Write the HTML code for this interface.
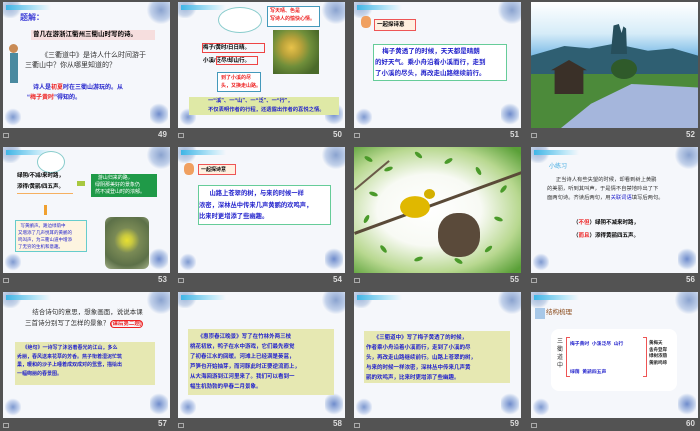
<!DOCTYPE html>
<html><head><meta charset="utf-8"><style>
*{margin:0;padding:0;box-sizing:border-box}
body{width:700px;height:431px;background:#535353;position:relative;overflow:hidden;font-family:"Liberation Sans","Noto Sans CJK SC",sans-serif}
.s{position:absolute;width:167px;height:126px;background:#f5f7fb;overflow:hidden}
.s .a{position:absolute}
.c1{left:-6px;top:-6px;width:26px;height:22px;background:radial-gradient(circle,#9fb5d8 0,#c9d6ea 50%,transparent 70%)}
.c2{right:-6px;top:-6px;width:30px;height:28px;background:radial-gradient(circle,#8aa3cf 0,#c2d1ea 50%,transparent 70%)}
.c3{left:2px;bottom:2px;width:16px;height:18px;background:radial-gradient(circle,#7f9ad0 0,#c7d4ee 50%,transparent 72%)}
.c4{right:2px;bottom:2px;width:18px;height:24px;background:radial-gradient(circle,#6f8ccc 0,#c0cfea 50%,transparent 72%)}
.hb{left:3px;top:3px;width:45px;height:5px;background:linear-gradient(90deg,#3fb5e6,#bfe8f8 70%,transparent)}
.t{position:absolute;font-size:7px;line-height:10px;white-space:nowrap}
.lb{position:absolute;color:#ddd;font-size:8px;font-weight:bold}
.ic{position:absolute;width:6px;height:5px;border:1px solid #aaa}
.lf{position:absolute;width:9px;height:4px;border-radius:50%;background:#4a9a2a}
</style></head><body>

<!-- 49 -->
<div class="s" style="left:3px;top:2px">
<div class="a c1"></div><div class="a c2"></div><div class="a c3"></div><div class="a c4"></div><div class="a hb"></div>
<div class="t" style="left:17px;top:11px;color:#3b3bd6;font-weight:bold;font-size:8px">题解：</div>
<div class="a" style="left:28px;top:28px;width:124px;height:10px;background:#f6dede"></div>
<div class="t" style="left:30px;top:28px;font-weight:bold;font-size:6.5px">曾几在游浙江衢州三衢山时写的诗。</div>
<div class="a" style="left:6px;top:42px;width:9px;height:9px;border-radius:50%;background:#c98b55"></div>
<div class="a" style="left:7px;top:51px;width:8px;height:30px;background:#4a8aa0"></div>
<div class="t" style="left:38px;top:49px;color:#333">《三衢道中》是诗人什么时间游于</div>
<div class="t" style="left:22px;top:59px;color:#333">三衢山中？你从哪里知道的？</div>
<div class="t" style="left:30px;top:81px;color:#2222cc;font-weight:bold;font-size:6px">诗人是<span style="color:#e22">初夏</span>时在三衢山游玩的。从</div>
<div class="t" style="left:24px;top:91px;color:#2222cc;font-weight:bold;font-size:6px">“<span style="color:#e22">梅子黄时</span>”得知的。</div>
</div>

<!-- 50 -->
<div class="s" style="left:178px;top:2px">
<div class="a c1"></div><div class="a c2"></div><div class="a c3"></div><div class="a c4"></div><div class="a hb"></div>
<div class="a" style="left:40px;top:5px;width:44px;height:26px;border:1px solid #8cc;border-radius:50%;background:#fff"></div>
<div class="a" style="left:89px;top:4px;width:53px;height:21px;border:1px solid #49b;background:#fff"></div>
<div class="t" style="left:92px;top:5px;color:#e22;font-weight:bold;font-size:5px;line-height:8px">写天晴、色是<br>写诗人的愉快心情。</div>
<div class="a" style="left:95px;top:28px;width:46px;height:44px;background:radial-gradient(circle at 40% 40%,#e8c24a 0,#b9a23a 25%,#6f8e3a 50%,#4a6a2a 80%)"></div>
<div class="a" style="left:24px;top:41px;width:63px;height:10px;border:1px solid #e44"></div>
<div class="t" style="left:25px;top:41px;font-weight:bold;font-size:5.5px">梅子/黄时/日日晴。</div>
<div class="t" style="left:25px;top:54px;font-weight:bold;font-size:5.5px">小溪/泛尽/却山行。</div>
<div class="a" style="left:38px;top:54px;width:42px;height:9px;border:1px solid #e44"></div>
<div class="a" style="left:39px;top:70px;width:44px;height:20px;border:1px solid #49b;background:#fff"></div>
<div class="t" style="left:43px;top:72px;color:#e22;font-weight:bold;font-size:5px;line-height:8px">到了小溪的尽<br>头，又换走山路。</div>
<div class="a" style="left:11px;top:95px;width:150px;height:18px;background:#dfe9a6"></div>
<div class="t" style="left:30px;top:95px;color:#2222cc;font-weight:bold;font-size:5.3px;line-height:9px">一“溪”、一“山”、一“泛”、一“行”，<br>不仅表明作者的行程，还透露出作者的喜悦之情。</div>
</div>

<!-- 51 -->
<div class="s" style="left:354px;top:2px">
<div class="a c1"></div><div class="a c2"></div><div class="a c3"></div><div class="a c4"></div><div class="a hb"></div>
<div class="a" style="left:7px;top:14px;width:10px;height:12px;background:#f0a060;border-radius:40%"></div>
<div class="a" style="left:20px;top:17px;width:42px;height:12px;border:1px solid #e55;background:#fff0e0"></div>
<div class="t" style="left:23px;top:18px;font-size:5.5px;font-weight:bold">一起探诗意</div>
<div class="a" style="left:19px;top:42px;width:134px;height:37px;border:1px solid #6c9;background:#fff"></div>
<div class="t" style="left:21px;top:44px;color:#2222cc;font-weight:bold;font-size:6.5px;line-height:11px">&nbsp;&nbsp;&nbsp;&nbsp;梅子黄透了的时候，天天都是晴朗<br>的好天气。乘小舟沿着小溪而行，走到<br>了小溪的尽头，再改走山路继续前行。</div>
</div>

<!-- 52 -->
<div class="s" style="left:531px;top:2px;background:linear-gradient(180deg,#fff 0,#d6ecf8 25%,#6fb4e4 45%)">
<div class="a" style="left:0;top:32px;width:167px;height:48px;background:#2f5f72;clip-path:polygon(0 45%,20% 25%,35% 30%,50% 20%,70% 35%,85% 30%,100% 45%,100% 100%,0 100%)"></div>
<div class="a" style="left:78px;top:22px;width:18px;height:30px;background:#274f5c;clip-path:polygon(10% 100%,25% 5%,55% 0,70% 30%,80% 8%,95% 15%,100% 100%)"></div>
<div class="a" style="left:0;top:72px;width:167px;height:54px;background:#4c8a3a"></div>
<div class="a" style="left:20px;top:58px;width:36px;height:34px;background:#3a3028;clip-path:polygon(0 30%,50% 0,100% 30%,90% 30%,90% 100%,10% 100%,10% 30%)"></div>
<div class="a" style="left:18px;top:82px;width:150px;height:44px;background:#a5b6dc;clip-path:polygon(8% 100%,28% 45%,55% 0,100% 8%,100% 100%)"></div>
<div class="a" style="left:80px;top:57px;width:26px;height:20px;border-radius:50%;background:#2f5a2a"></div>
</div>

<!-- labels row1 -->
<div class="ic" style="left:3px;top:133px"></div><div class="lb" style="left:158px;top:130px">49</div>
<div class="ic" style="left:178px;top:133px"></div><div class="lb" style="left:333px;top:130px">50</div>
<div class="ic" style="left:354px;top:133px"></div><div class="lb" style="left:510px;top:130px">51</div>
<div class="ic" style="left:531px;top:133px"></div><div class="lb" style="left:686px;top:130px">52</div>

<!-- 53 -->
<div class="s" style="left:3px;top:147px">
<div class="a c1"></div><div class="a c2"></div><div class="a c3"></div><div class="a c4"></div><div class="a hb"></div>
<div class="a" style="left:34px;top:4px;width:28px;height:22px;border:1px solid #8cc;border-radius:50%;background:#fff"></div>
<div class="t" style="left:14px;top:24px;font-weight:bold;font-size:5.5px;line-height:11px">绿阴/不减/来时路，<br>添得/黄鹂/四五声。</div>
<div class="a" style="left:14px;top:46px;width:56px;height:1px;background:#f6b060"></div>
<div class="a" style="left:74px;top:34px;width:8px;height:5px;background:#a8c840"></div>
<div class="a" style="left:88px;top:27px;width:66px;height:23px;background:#1f9a48"></div>
<div class="t" style="left:92px;top:28px;color:#fff;font-size:5px;line-height:7px">&nbsp;&nbsp;游山归来的路，<br>绿阴那美好的景象仍<br>然不减登山时的浓郁。</div>
<div class="a" style="left:41px;top:58px;width:3px;height:10px;background:#f0a030"></div>
<div class="a" style="left:12px;top:73px;width:72px;height:32px;border:1px solid #6cc;background:#fdf4e0"></div>
<div class="t" style="left:15px;top:75px;color:#2222cc;font-size:4.5px;line-height:7px">&nbsp;&nbsp;写黄鹂声。路边绿荫中<br>又增添了几声悦耳的黄鹂的<br>鸣叫声，为三衢山道中增添<br>了无穷的生机和意趣。</div>
<div class="a" style="left:102px;top:70px;width:44px;height:52px;border-radius:6px;background:radial-gradient(circle at 50% 45%,#e8e030 0,#c8c840 15%,#7a8a55 35%,#5c7048 70%,#a4b088 100%)"></div>
</div>

<!-- 54 -->
<div class="s" style="left:178px;top:147px">
<div class="a c1"></div><div class="a c2"></div><div class="a c3"></div><div class="a c4"></div><div class="a hb"></div>
<div class="a" style="left:6px;top:16px;width:10px;height:12px;background:#f0a060;border-radius:40%"></div>
<div class="a" style="left:20px;top:17px;width:38px;height:11px;border:1px solid #e55;background:#fff0e0"></div>
<div class="t" style="left:23px;top:18px;font-size:5px;font-weight:bold">一起探诗意</div>
<div class="a" style="left:20px;top:38px;width:133px;height:40px;border:1px solid #6c9;background:#fff"></div>
<div class="t" style="left:21px;top:41px;color:#2222cc;font-weight:bold;font-size:6.3px;line-height:11.5px">&nbsp;&nbsp;&nbsp;&nbsp;&nbsp;&nbsp;山路上苍翠的树，与来的时候一样<br>浓密，深林丛中传来几声黄鹂的欢鸣声，<br>比来时更增添了些幽趣。</div>
</div>

<!-- 55 -->
<div class="s" style="left:354px;top:147px;background:radial-gradient(ellipse at 45% 50%,#fff 0,#f8faf4 40%,#b8d890 70%,#5aa038 95%)">
<div class="lf" style="left:10px;top:10px;transform:rotate(30deg)"></div>
<div class="lf" style="left:30px;top:20px;transform:rotate(-20deg)"></div>
<div class="lf" style="left:60px;top:6px;transform:rotate(40deg)"></div>
<div class="lf" style="left:90px;top:12px;transform:rotate(-30deg)"></div>
<div class="lf" style="left:120px;top:22px;transform:rotate(60deg)"></div>
<div class="lf" style="left:145px;top:40px;transform:rotate(-50deg)"></div>
<div class="lf" style="left:140px;top:70px;transform:rotate(20deg)"></div>
<div class="lf" style="left:130px;top:100px;transform:rotate(-40deg)"></div>
<div class="lf" style="left:100px;top:112px;transform:rotate(30deg)"></div>
<div class="lf" style="left:60px;top:110px;transform:rotate(-20deg)"></div>
<div class="lf" style="left:25px;top:100px;transform:rotate(50deg)"></div>
<div class="lf" style="left:8px;top:70px;transform:rotate(-60deg)"></div>
<div class="lf" style="left:15px;top:45px;transform:rotate(20deg)"></div>
<div class="a" style="left:0;top:85px;width:180px;height:3px;background:#5a4a38;transform:rotate(-20deg);transform-origin:0 0"></div>
<div class="a" style="left:0;top:42px;width:45px;height:2px;background:#6a5a48;transform:rotate(-40deg);transform-origin:0 0"></div>
<div class="a" style="left:46px;top:47px;width:30px;height:26px;border-radius:50%;background:#e0b800;clip-path:ellipse(50% 42% at 50% 50%)"></div>
<div class="a" style="left:70px;top:42px;width:11px;height:10px;border-radius:50%;background:#d4b000"></div>
<div class="a" style="left:84px;top:66px;width:42px;height:44px;border-radius:45%;background:#5a4a3a"></div>
</div>

<!-- 56 -->
<div class="s" style="left:531px;top:147px">
<div class="a c1"></div><div class="a c2"></div><div class="a c3"></div><div class="a c4"></div><div class="a hb"></div>
<div class="t" style="left:18px;top:15px;color:#3aa8e0;font-size:6px">小练习</div>
<div class="t" style="left:16px;top:29px;color:#333;font-size:5.3px;line-height:9px">&nbsp;&nbsp;&nbsp;&nbsp;&nbsp;&nbsp;正当诗人有些失望的时候，却看到树上黄鹂<br>的美丽，听到其叫声，于是情不自禁地吟出了下<br>面两句诗。齐读后两句，用<span style="color:#22c">关联词语</span>填写后两句。</div>
<div class="t" style="left:42px;top:70px;font-weight:bold;font-size:5.5px;line-height:13px">（<span style="color:#e22">不但</span>）绿阴不减来时路，<br>（<span style="color:#e22">而且</span>）添得黄鹂四五声。</div>
</div>

<!-- labels row2 -->
<div class="ic" style="left:3px;top:278px"></div><div class="lb" style="left:158px;top:275px">53</div>
<div class="ic" style="left:178px;top:278px"></div><div class="lb" style="left:333px;top:275px">54</div>
<div class="ic" style="left:354px;top:278px"></div><div class="lb" style="left:510px;top:275px">55</div>
<div class="ic" style="left:531px;top:278px"></div><div class="lb" style="left:686px;top:275px">56</div>

<!-- 57 -->
<div class="s" style="left:3px;top:292px">
<div class="a c1"></div><div class="a c2"></div><div class="a c3"></div><div class="a c4"></div><div class="a hb"></div>
<div class="t" style="left:22px;top:15px;color:#333;font-size:6.5px;line-height:11px">&nbsp;&nbsp;&nbsp;&nbsp;结合诗句的意思，想象画面，说说本课<br>三首诗分别写了怎样的景象？<span style="color:#e22;font-weight:bold;font-size:5.5px;border:1px solid #e22;border-radius:5px">(课后第二题)</span></div>
<div class="a" style="left:12px;top:50px;width:140px;height:43px;background:#e6e8b2"></div>
<div class="t" style="left:14px;top:52px;color:#2222cc;font-weight:bold;font-size:5px;line-height:8.5px">&nbsp;&nbsp;&nbsp;&nbsp;《绝句》一诗写了沐浴着春光的江山，多么<br>秀丽，春风送来花草的芳香。燕子衔着湿泥忙筑<br>巢，暖和的沙子上睡着成双成对的鸳鸯，描绘出<br>一幅绚丽的春景图。</div>
</div>

<!-- 58 -->
<div class="s" style="left:178px;top:292px">
<div class="a c1"></div><div class="a c2"></div><div class="a c3"></div><div class="a c4"></div><div class="a hb"></div>
<div class="a" style="left:10px;top:37px;width:146px;height:66px;background:#e6e8b2"></div>
<div class="t" style="left:12px;top:40px;color:#2222cc;font-weight:bold;font-size:5.5px;line-height:10px">&nbsp;&nbsp;&nbsp;&nbsp;&nbsp;《惠崇春江晚景》写了在竹林外两三枝<br>桃花初放，鸭子在水中游戏，它们最先察觉<br>了初春江水的回暖。河滩上已经满是蒌蒿，<br>芦笋也开始抽芽，而河豚此时正要逆流而上，<br>从大海回游到江河里来了。我们可以看到一<br>幅生机勃勃的早春二月景象。</div>
</div>

<!-- 59 -->
<div class="s" style="left:354px;top:292px">
<div class="a c1"></div><div class="a c2"></div><div class="a c3"></div><div class="a c4"></div><div class="a hb"></div>
<div class="a" style="left:10px;top:39px;width:146px;height:52px;background:#e6e8b2"></div>
<div class="t" style="left:12px;top:41px;color:#2222cc;font-weight:bold;font-size:5.5px;line-height:10px">&nbsp;&nbsp;&nbsp;&nbsp;&nbsp;《三衢道中》写了梅子黄透了的时候，<br>作者乘小舟沿着小溪而行，走到了小溪的尽<br>头，再改走山路继续前行。山路上苍翠的树，<br>与来的时候一样浓密，深林丛中传来几声黄<br>鹂的欢鸣声，比来时更增添了些幽趣。</div>
</div>

<!-- 60 -->
<div class="s" style="left:531px;top:292px">
<div class="a c1"></div><div class="a c2"></div><div class="a c3"></div><div class="a c4"></div><div class="a hb"></div>
<div class="a" style="left:4px;top:16px;width:10px;height:11px;background:#a8c8e8"></div>
<div class="t" style="left:15px;top:16px;color:#8a4a1a;font-size:6.5px">结构梳理</div>
<div class="a" style="left:20px;top:37px;width:126px;height:62px;border-radius:8px;background:#fff"></div>
<div class="t" style="left:26px;top:46px;color:#333;font-size:6px;line-height:8px">三<br>衢<br>道<br>中</div>
<div class="a" style="left:35px;top:45px;width:4px;height:40px;border:1px solid #e55;border-right:none"></div>
<div class="t" style="left:39px;top:48px;color:#2222cc;font-weight:bold;font-size:4.8px">梅子黄时&nbsp;&nbsp;小溪泛尽&nbsp;&nbsp;山行</div>
<div class="t" style="left:39px;top:76px;color:#2222cc;font-weight:bold;font-size:4.8px">绿荫&nbsp;&nbsp;黄鹂四五声</div>
<div class="a" style="left:112px;top:45px;width:4px;height:40px;border:1px solid #e55;border-left:none"></div>
<div class="t" style="left:118px;top:48px;color:#222;font-weight:bold;font-size:4.5px;line-height:6.5px">黄梅天<br>舍舟登岸<br>绿树浓荫<br>黄鹂鸣啼</div>
</div>

<!-- labels row3 -->
<div class="ic" style="left:3px;top:423px"></div><div class="lb" style="left:158px;top:419px">57</div>
<div class="ic" style="left:178px;top:423px"></div><div class="lb" style="left:333px;top:419px">58</div>
<div class="ic" style="left:354px;top:423px"></div><div class="lb" style="left:510px;top:419px">59</div>
<div class="ic" style="left:531px;top:423px"></div><div class="lb" style="left:686px;top:419px">60</div>
</body></html>
